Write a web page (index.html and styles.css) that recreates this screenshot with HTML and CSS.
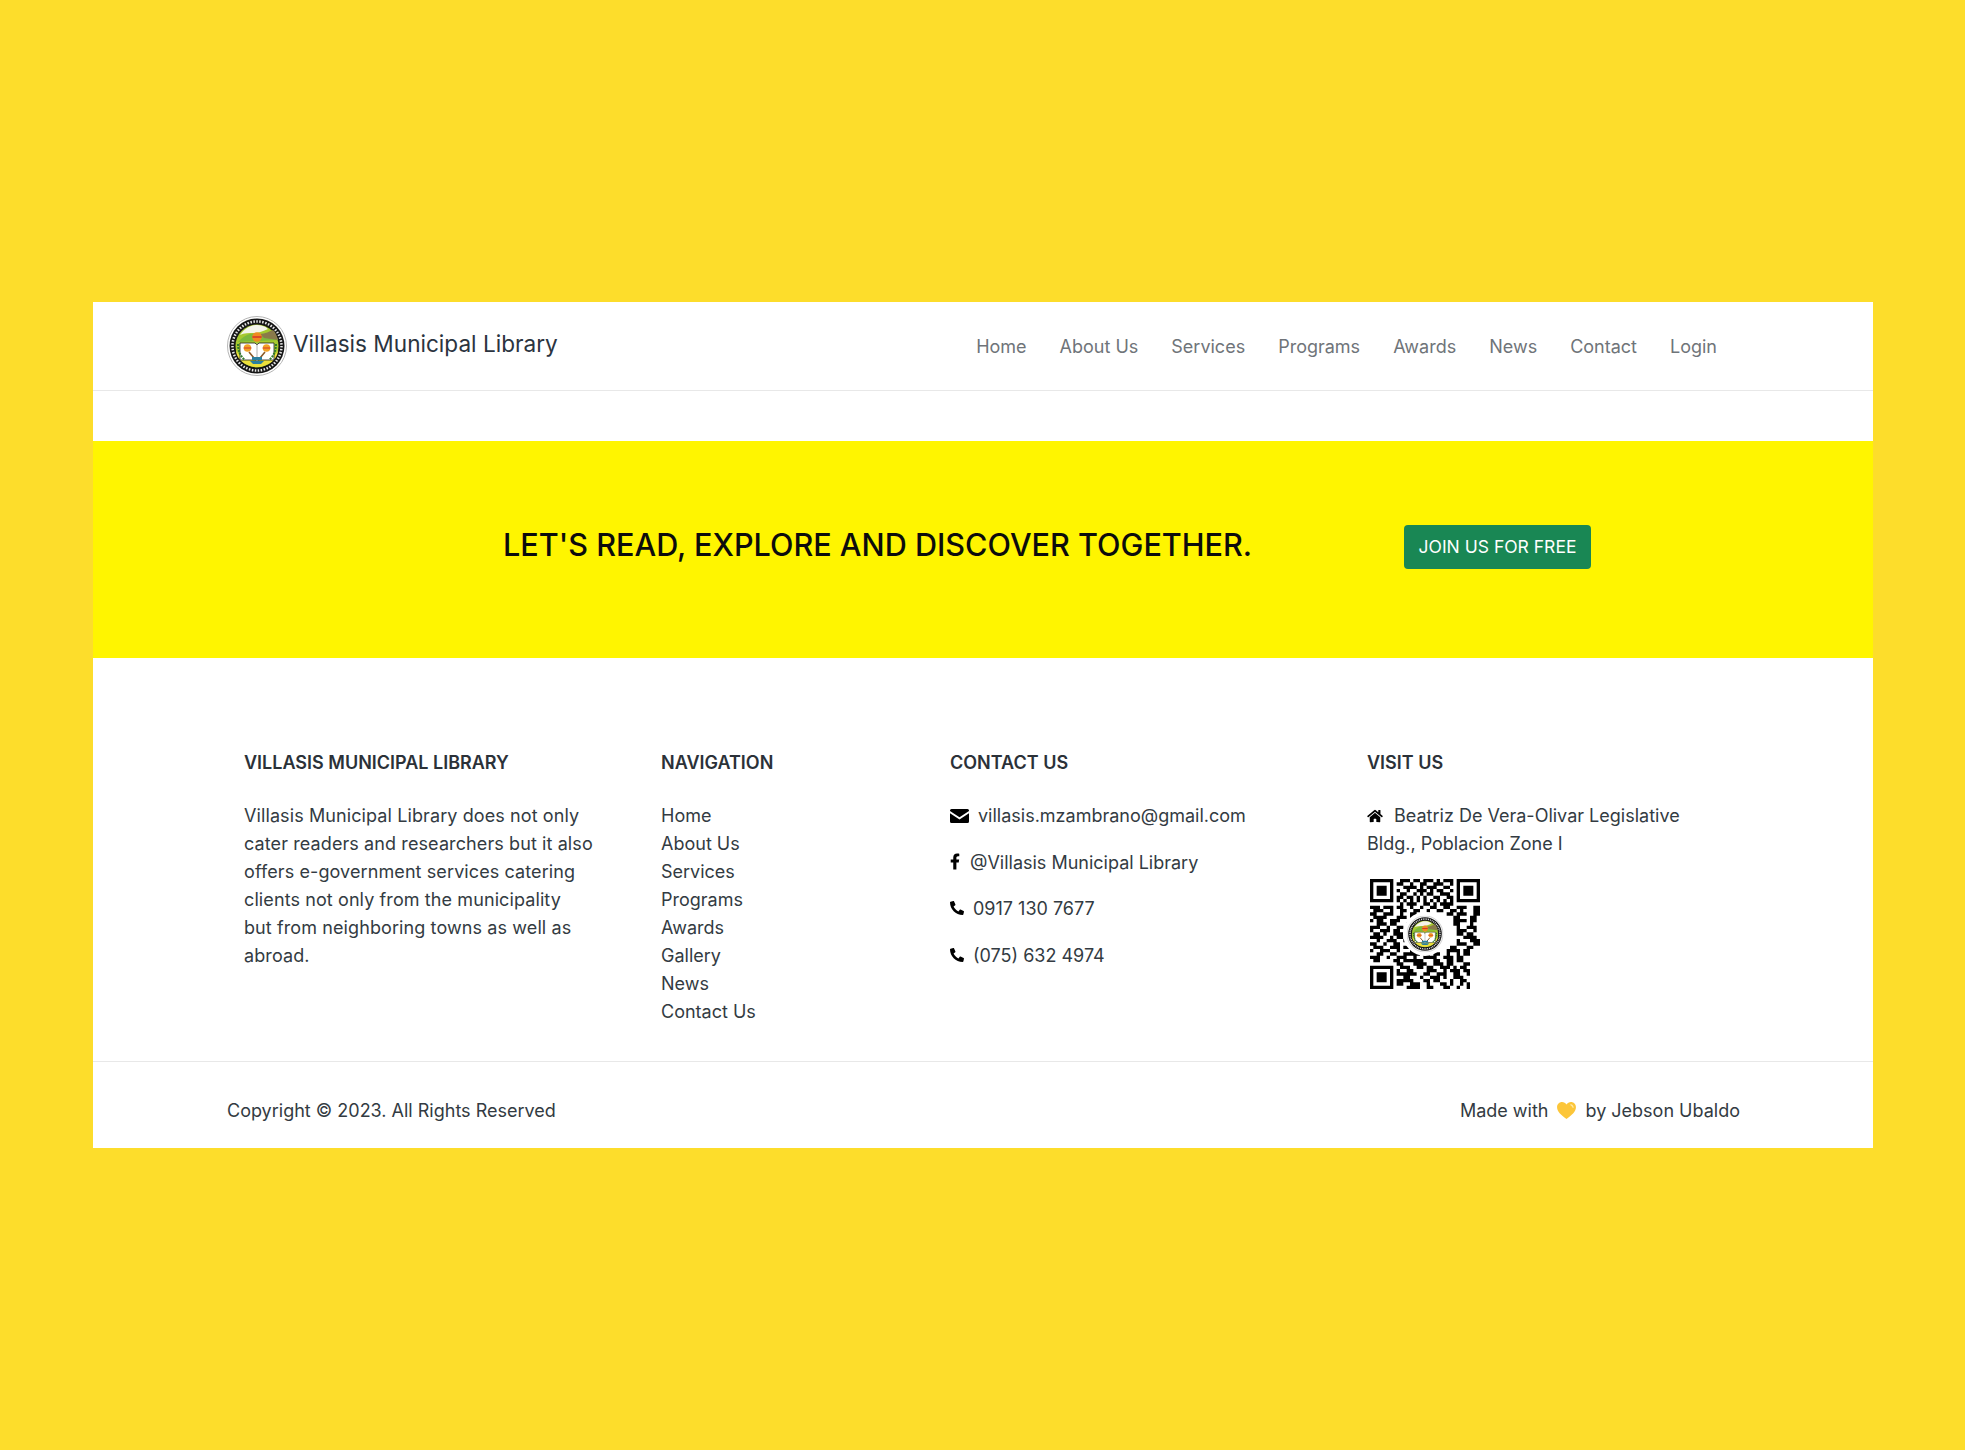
FILE: index.html
```html
<!DOCTYPE html>
<html lang="en">
<head>
    <meta charset="UTF-8">
    <meta name="viewport" content="width=device-width, initial-scale=1.0">
    <title>Villasis Municipal Library</title>
    <link rel="stylesheet" href="styles.css">
</head>
<body>
    <svg class="defs" width="0" height="0" aria-hidden="true">
        <symbol id="seal" viewBox="0 0 60 60">
            <circle cx="30" cy="30" r="29.5" fill="#fff" stroke="#b5b5b5" stroke-width="1"/>
            <circle cx="30" cy="30" r="27.5" fill="#161616"/>
            <circle cx="30" cy="30" r="21.5" fill="#a6c92f"/>
            <path d="M11 26c6-7 13-10 22-8 5 1 10-1 14-3l4 9z" fill="#7cb93c"/>
            <path d="M33 18c5 0 10-3 13-4 3 3 4 6 5 10l-14-2z" fill="#8a7a4a"/>
            <path d="M13 19c4-6 10-10 17-10 4 0 8 1 11 4-5 2-9 4-14 4-5 0-10 0-14 2z" fill="#f4f4ea"/>
            <path d="M9 34c0 9 10 17 21 17s21-8 21-17c-2 6-11 11-21 11S11 40 9 34z" fill="#ecdf3c"/>
            <path d="M13 27h15l2 2 2-2h15v17H32l-2 1-2-1H13z" fill="#fff" stroke="#222" stroke-width=".8"/>
            <circle cx="30" cy="21" r="4.800" fill="#ee8a22"/>
            <path d="M25.400 21h9.200" stroke="#d6362a" stroke-width="1.600"/>
            <circle cx="20.500" cy="32" r="3.800" fill="#f2a126"/>
            <circle cx="39.500" cy="32" r="3.800" fill="#f2a126"/>
            <path d="M16.700 32h7.600M35.700 32h7.600" stroke="#d6362a" stroke-width="1.200"/>
            <path d="M22 36l5 6M38 36l-5 6" stroke="#8a5a2a" stroke-width="1.600"/>
            <path d="M30 27v18" stroke="#999" stroke-width=".8"/>
            <path d="M23 45h14l-3 3h-8z" fill="#2a7fa0"/>
            <path d="M25 41h10v3H25z" fill="#2a7fa0"/>
            <path d="M11 28c0 6 2 12 7 16M49 28c0 6-2 12-7 16" fill="none" stroke="#2f7a2a" stroke-width="2" stroke-dasharray="2 1"/>
            <circle cx="30" cy="30" r="24.500" fill="none" stroke="#e8e8e8" stroke-width="2.500" stroke-dasharray="1.500 1.500"/>
        </symbol>
    </svg>

    <div class="page">
        <header class="navbar">
            <a class="brand" href="#">
                <svg class="brand-logo" viewBox="0 0 60 60"><use href="#seal"/></svg>
                <span>Villasis Municipal Library</span>
            </a>
            <nav class="nav-links">
                <a href="#">Home</a>
                <a href="#">About Us</a>
                <a href="#">Services</a>
                <a href="#">Programs</a>
                <a href="#">Awards</a>
                <a href="#">News</a>
                <a href="#">Contact</a>
                <a href="#">Login</a>
            </nav>
        </header>

        <section class="cta">
            <h2>LET'S READ, EXPLORE AND DISCOVER TOGETHER.</h2>
            <a class="btn-join" href="#">JOIN US FOR FREE</a>
        </section>

        <section class="footer-main">
            <div class="footer-col">
                <h3>VILLASIS MUNICIPAL LIBRARY</h3>
                <p class="about">Villasis Municipal Library does not only<br>cater readers and researchers but it also<br>offers e-government services catering<br>clients not only from the municipality<br>but from neighboring towns as well as<br>abroad.</p>
            </div>
            <div class="footer-col">
                <h3>NAVIGATION</h3>
                <ul class="footer-links">
                    <li><a href="#">Home</a></li>
                    <li><a href="#">About Us</a></li>
                    <li><a href="#">Services</a></li>
                    <li><a href="#">Programs</a></li>
                    <li><a href="#">Awards</a></li>
                    <li><a href="#">Gallery</a></li>
                    <li><a href="#">News</a></li>
                    <li><a href="#">Contact Us</a></li>
                </ul>
            </div>
            <div class="footer-col">
                <h3>CONTACT US</h3>
                <p class="contact">
                    <svg class="icon icon-mail" viewBox="0 0 19 14"><path d="M1.500 0h16A1.500 1.500 0 0 1 19 1.500v.6L9.500 8.200 0 2.100v-.6A1.500 1.500 0 0 1 1.500 0zM0 4.300l9.500 6.100L19 4.300v8.200a1.500 1.500 0 0 1-1.500 1.500h-16A1.500 1.500 0 0 1 0 12.500z"/></svg>
                    villasis.mzambrano@gmail.com
                </p>
                <p class="contact">
                    <svg class="icon icon-fb" viewBox="0 0 320 512"><path d="M279.14 288l14.22-92.66h-88.91v-60.13c0-25.35 12.42-50.06 52.24-50.06h40.42V6.26S260.43 0 225.36 0c-73.22 0-121.08 44.38-121.08 124.72v70.62H22.89V288h81.39v224h100.17V288z"/></svg>
                    @Villasis Municipal Library
                </p>
                <p class="contact">
                    <svg class="icon icon-phone" viewBox="0 0 512 512"><path transform="matrix(-1 0 0 1 512 0)" d="M493.4 24.6l-104-24c-11.3-2.600-22.900 3.300-27.500 13.900l-48 112c-4.200 9.800-1.400 21.300 6.900 28l60.600 49.600c-36 76.700-98.900 140.500-177.200 177.200l-49.600-60.600c-6.800-8.300-18.200-11.100-28-6.900l-112 48C3.900 366.500-2 378.100.6 389.400l24 104C27.100 504.200 36.700 512 48 512c256.100 0 464-207.500 464-464 0-11.200-7.700-20.900-18.600-23.400z"/></svg>
                    0917 130 7677
                </p>
                <p class="contact">
                    <svg class="icon icon-phone" viewBox="0 0 512 512"><path transform="matrix(-1 0 0 1 512 0)" d="M493.4 24.6l-104-24c-11.3-2.600-22.900 3.300-27.500 13.900l-48 112c-4.200 9.800-1.400 21.300 6.900 28l60.600 49.600c-36 76.700-98.900 140.500-177.200 177.200l-49.600-60.600c-6.800-8.300-18.200-11.100-28-6.900l-112 48C3.900 366.500-2 378.100.6 389.400l24 104C27.100 504.200 36.700 512 48 512c256.100 0 464-207.500 464-464 0-11.200-7.700-20.900-18.600-23.400z"/></svg>
                    (075) 632 4974
                </p>
            </div>
            <div class="footer-col">
                <h3>VISIT US</h3>
                <p class="address">
                    <svg class="icon icon-home" viewBox="0 0 576 512"><path d="M280.37 148.26L96 300.11V464a16 16 0 0 0 16 16l112.06-.29a16 16 0 0 0 15.92-16V368a16 16 0 0 1 16-16h64a16 16 0 0 1 16 16v95.64a16 16 0 0 0 16 16.05L464 480a16 16 0 0 0 16-16V300L295.67 148.26a12.19 12.19 0 0 0-15.3 0zM571.6 251.47L488 182.56V44.05a12 12 0 0 0-12-12h-56a12 12 0 0 0-12 12v72.61L318.47 43a48 48 0 0 0-61 0L4.34 251.47a12 12 0 0 0-1.6 16.9l25.5 31A12 12 0 0 0 45.15 301l235.22-193.74a12.19 12.19 0 0 1 15.3 0L530.9 301a12 12 0 0 0 16.9-1.6l25.5-31a12 12 0 0 0-1.7-16.93z"/></svg>
                    Beatriz De Vera-Olivar Legislative Bldg., Poblacion Zone I
                </p>
                <svg class="qr" viewBox="0 0 33 33">
                    <path fill-rule="evenodd" d="M0 0h7v7H0zM1 1v5h5V1zM2 2h3v3H2zM26 0h7v7h-7zM27 1v5h5V1zM28 2h3v3h-3zM0 26h7v7H0zM1 27v5h5v-5zM2 28h3v3H2z"/>
                    <path class="qr-data" d="M9 .5h3m1 0h2m1 0h3m1 0h1m1 0h3
                        M8 1.500h2m2 0h1m2 0h2m2 0h3m2 0h1
                        M10 2.500h4m1 0h1m1 0h3m2 0h2
                        M8 3.500h1m2 0h1m2 0h3m1 0h1m1 0h2m2 0h1
                        M9 4.500h2m2 0h1m1 0h1m1 0h2m2 0h3
                        M8 5.500h2m1 0h2m1 0h1m1 0h1m2 0h2m2 0h2
                        M8 6.500h1m1 0h1m1 0h1m1 0h1m1 0h1m1 0h1m1 0h1m1 0h1m1 0h1
                        M9 7.500h1m1 0h3m2 0h2m1 0h1m1 0h4
                        M0 8.500h3m1 0h3m1 0h2m2 0h1m2 0h1m2 0h2m2 0h2m2 0h3m2 0h2
                        M1 9.500h3m2 0h1m2 0h2m2 0h2m2 0h1m2 0h2m2 0h2m1 0h1m3 0h2
                        M0 10.500h2m2 0h3m2 0h1m2 0h2m9 0h2m1 0h3m2 0h3
                        M1 11.500h4m3 0h3m1 0h1m12 0h2m3 0h2
                        M0 12.500h1m1 0h2m2 0h3m16 0h4m1 0h2
                        M2 13.500h3m1 0h2m3 0h1m13 0h2m3 0h1
                        M0 14.500h3m2 0h1m2 0h2m16 0h1m2 0h3
                        M0 15.500h1m2 0h3m1 0h2m17 0h3m2 0h1
                        M1 16.500h2m1 0h1m2 0h3m16 0h2m1 0h2
                        M0 17.500h4m2 0h1m1 0h2m18 0h4
                        M2 18.500h1m2 0h3m2 0h1m15 0h1m3 0h3
                        M0 19.500h2m2 0h1m2 0h2m17 0h3m2 0h2
                        M1 20.500h3m2 0h3m1 0h2m12 0h2m3 0h2
                        M0 21.500h1m2 0h3m2 0h1m3 0h3m8 0h4m1 0h2
                        M2 22.500h2m2 0h2m2 0h5m1 0h2m1 0h2m2 0h1m2 0h1m1 0h2
                        M0 23.500h3m2 0h1m2 0h3m2 0h1m2 0h4m2 0h3m1 0h2
                        M1 24.500h2m4 0h2m1 0h6m3 0h2m2 0h2m1 0h2
                        M8 25.500h2m3 0h4m2 0h3m1 0h2m3 0h2
                        M9 26.500h3m2 0h2m1 0h2m2 0h3m1 0h1m1 0h2
                        M8 27.500h1m2 0h2m4 0h3m2 0h1m1 0h3m1 0h2
                        M8 28.500h6m2 0h2m2 0h3m2 0h2m2 0h1
                        M10 29.500h2m3 0h1m2 0h3m1 0h1m2 0h3
                        M8 30.500h5m3 0h2m1 0h2m3 0h1m2 0h2
                        M8 31.500h2m2 0h3m2 0h1m3 0h2m1 0h1m2 0h1m1 0h1
                        M11 32.500h4m2 0h2m3 0h2m2 0h1m2 0h1"/>
                    <circle class="qr-gap" cx="16.500" cy="16.500" r="6.600"/>
                    <use href="#seal" x="11" y="11" width="11" height="11"/>
                </svg>
            </div>
        </section>

        <footer class="footer-bottom">
            <span>Copyright © 2023. All Rights Reserved</span>
            <span class="made-with">Made with
                <svg class="heart" viewBox="0 0 20 18">
                    <path d="M10 18C4 13.500 0 10 0 5.500 0 2.300 2.400 0 5.300 0 7.200 0 9 1 10 2.700 11 1 12.800 0 14.700 0 17.600 0 20 2.300 20 5.500 20 10 16 13.500 10 18z" fill="#fcc63a"/>
                    <path d="M14.500 2.500c1.800.2 3 1.500 3 3.200 0 .8-.7 1-1 .3-.3-1-1-1.800-2-2.300-.7-.4-.8-1.300 0-1.200z" fill="#ffe9a6"/>
                </svg>
                by Jebson Ubaldo</span>
        </footer>
    </div>
</body>
</html>
```

FILE: styles.css
```css
* {
    box-sizing: border-box;
}
body {
    margin: 0;
    height: 1450px;
    display: flex;
    align-items: center;
    padding-left: 93px;
    background-color: #fddd2b;
    font-family: Inter, "Liberation Sans", sans-serif;
    font-size: 18px;
    color: #333b42;
}
a {
    color: inherit;
    text-decoration: none;
}
.defs {
    position: absolute;
}
.page {
    width: 1780px;
    background: #fff;
}
.navbar {
    height: 89px;
    padding: 0 156px 0 134px;
    display: flex;
    align-items: center;
    justify-content: space-between;
    border-bottom: 1px solid #e8e8e8;
}
.brand {
    display: flex;
    align-items: center;
    gap: 6px;
    font-size: 22.600px;
    color: #2b3440;
}
.brand span {
    margin-top: -5px;
}
.brand-logo {
    width: 60px;
    height: 60px;
}
.nav-links {
    display: flex;
    gap: 33px;
    color: #6f7479;
}
.cta {
    margin-top: 50px;
    height: 217px;
    padding: 0 0 10px 410px;
    display: flex;
    align-items: center;
    background-color: #fff500;
}
.cta h2 {
    margin: 0;
    width: 901px;
    font-size: 30.600px;
    font-weight: 500;
    color: #0c0c0c;
}
.btn-join {
    width: 187px;
    height: 44px;
    display: flex;
    align-items: center;
    justify-content: center;
    border-radius: 4px;
    margin-top: 4px;
    background-color: #198754;
    color: #fff;
    font-size: 17.500px;
}
.footer-main {
    padding: 92px 0 0 151px;
    height: 404px;
    display: grid;
    grid-template-columns: 417px 289px 417px 391px;
    border-bottom: 1px solid #e8e8e8;
}
.footer-col h3 {
    margin: 0 0 26px;
    height: 26px;
    line-height: 26px;
    font-size: 18px;
    font-weight: 600;
    color: #2b3138;
}
.about {
    margin: 0;
    line-height: 28px;
    letter-spacing: .1px;
    white-space: nowrap;
}
.footer-links {
    list-style: none;
    margin: 0;
    padding: 0;
    line-height: 28px;
}
.contact {
    display: flex;
    align-items: center;
    gap: 9px;
    margin: 0 0 18.500px;
    line-height: 28px;
}
.icon {
    flex: none;
    fill: #000;
}
.icon-mail {
    width: 19px;
    height: 14px;
}
.icon-fb {
    width: 10px;
    height: 17px;
    margin: -2px 1px 0 0;
}
.icon-phone {
    width: 14px;
    height: 14px;
    margin-top: -2px;
}
.address {
    width: 340px;
    margin: 0 0 21px;
    line-height: 28px;
}
.icon-home {
    width: 16px;
    height: 14px;
    margin-right: 6px;
    vertical-align: -1px;
}
.qr {
    display: block;
    width: 110px;
    height: 110px;
    margin-left: 3px;
}
.qr-data {
    fill: none;
    stroke: #000;
    stroke-width: 1;
}
.qr-gap {
    fill: #fff;
}
.footer-bottom {
    height: 86px;
    padding: 11px 133px 0 134px;
    display: flex;
    align-items: center;
    justify-content: space-between;
}
.made-with {
    display: flex;
    align-items: center;
    gap: 9px;
}
.heart {
    width: 19px;
    height: 17px;
}
```
